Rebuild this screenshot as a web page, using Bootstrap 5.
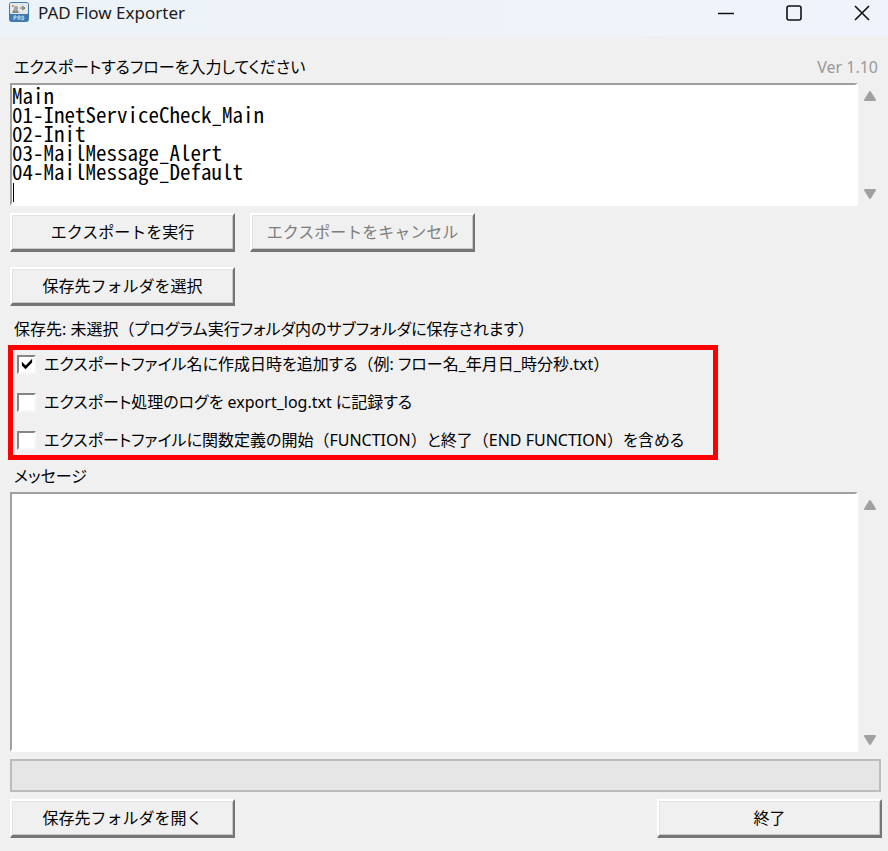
<!DOCTYPE html>
<html lang="ja">
<head>
<meta charset="utf-8">
<meta name="viewport" content="width=device-width, initial-scale=1">
<title>PAD Flow Exporter</title>
<link href="https://cdn.jsdelivr.net/npm/bootstrap@5.3.0/dist/css/bootstrap.min.css" rel="stylesheet">
<style>
  body {
    background: #f0f0f0;
    color: #000;
    font-family: "Noto Sans", "Noto Sans CJK JP", sans-serif;
    font-size: 16px;
    line-height: 24px;
    font-feature-settings: "palt";
  }
  .titlebar { height: 36px; background: linear-gradient(90deg, #ecf3f8, #f0f3fb); }
  .titlebar .app-name { color: #1a1a1a; font-size: 17px; line-height: 26px; }
  .win-btns { gap: 16px; }
  .win-btn { width: 52px; height: 24px; color: #111; }
  .pane { padding: 19px 6px 13px 10px; }
  .caption { padding-left: 4px; }
  .wide { font-feature-settings: normal; }
  .version { color: #999; padding-right: 4px; }
  .stack-gap { margin-bottom: 7px; }
  .text-pane {
    background: #fff;
    border: solid;
    border-width: 2px 3px 3px 2px;
    border-color: #a0a0a0 #fff #fff #a0a0a0;
    color: #000;
    resize: none;
    outline: 0;
    overflow: hidden;
    padding: 0;
    display: block;
  }
  .flow-input {
    height: 123px;
    font-family: "Noto Sans CJK JP", monospace;
    font-feature-settings: "hwid";
    font-size: 21px;
    line-height: 19px;
    padding-top: 1px;
  }
  .caret-bar { left: 3px; top: 100px; width: 1px; height: 19px; background: #000; }
  .scroll-rail { width: 24px; padding: 8px 0 7px; }
  .scroll-rail button { line-height: 0; }
  .action-row { column-gap: 15px; margin-bottom: 15px; }
  .folder-row { margin-bottom: 11px; }
  .btn-classic {
    width: 225px;
    height: 39px;
    background: #f0f0f0;
    border: solid;
    border-width: 2px 2px 3px 2px;
    border-color: #fff #757575 #757575 #fff;
    box-shadow: inset 1px 1px #e3e3e3, inset -1px -1px #c8c8c8;
    color: #000;
    padding: 0 0 1px;
  }
  .btn-classic:disabled { color: #7d7d7d; }
  .options { width: 710px; max-width: 100%; margin-left: -2px; border: 5px solid #f00; padding: 2px 4px 3px; gap: 14px; }
  .tick {
    appearance: none;
    width: 19px;
    height: 19px;
    margin: 0;
    background: #fff;
    border: 2px solid;
    border-color: #858585 #f8f8f8 #f8f8f8 #858585;
    flex: none;
  }
  .tick:checked { background: #fff url("data:image/svg+xml,%3Csvg xmlns='http://www.w3.org/2000/svg' viewBox='0 0 15 15'%3E%3Cpath d='M2 5v4l4 4 7-7V2L6 9z'/%3E%3C/svg%3E") center / 14px no-repeat; }
  .meter { height: 33px; border: 2px solid #bcbcbc; background: #e6e6e6; margin-right: 1px; border-radius: 0; }
  .message-pane { min-height: 160px; }
</style>
<script src="https://cdn.jsdelivr.net/npm/bootstrap@5.3.0/dist/js/bootstrap.bundle.min.js"></script>
</head>
<body class="d-flex flex-column min-vh-100">
<header class="titlebar d-flex align-items-start">
  <svg class="ms-2 flex-shrink-0" width="22" height="24" viewBox="0 0 22 24" aria-hidden="true">
    <rect x="1" y="2" width="20" height="20" rx="3" fill="#3f79ad"/>
    <rect x="2" y="3" width="18" height="11" rx="1" fill="#e6e8e8"/>
    <circle cx="5" cy="6" r="1" fill="#c48645"/>
    <path d="M4 13l2-4 2 2 1-2 2 4z" fill="#85898c"/>
    <circle cx="8" cy="8" r="2" fill="#999d9e"/>
    <path d="M12 8h4M14 6l3 2-3 2" fill="none" stroke="#666b70"/>
    <path d="M6 20v-4h2v2H6M10 20v-4h2v4M10 18h2M14 16v4h1l1-2-1-2z" fill="none" stroke="#b8dcf4"/>
  </svg>
  <h1 class="app-name fw-normal mb-0 ms-2 flex-grow-1">PAD Flow Exporter</h1>
  <div class="win-btns d-flex">
    <button type="button" class="win-btn btn p-0 border-0 lh-1" aria-label="最小化"><svg width="16" height="16" viewBox="0 0 16 16"><path d="M0 8.5h16" stroke="currentColor" stroke-width="1.5"/></svg></button>
    <button type="button" class="win-btn btn p-0 border-0 lh-1" aria-label="最大化"><svg width="16" height="16" viewBox="0 0 16 16"><rect x="1" y="1" width="14" height="14" rx="2" fill="none" stroke="currentColor" stroke-width="1.6"/></svg></button>
    <button type="button" class="win-btn btn p-0 border-0 lh-1" aria-label="閉じる"><svg width="16" height="16" viewBox="0 0 16 16"><path d="M1 1l14 14M15 1L1 15" stroke="currentColor" stroke-width="1.6"/></svg></button>
  </div>
</header>

<main class="pane d-flex flex-column flex-grow-1">
  <div class="d-flex justify-content-between mb-1">
    <label class="caption" for="flows">エクスポートするフローを入力してください</label>
    <span class="version">Ver 1.10</span>
  </div>
  <div class="d-flex stack-gap">
    <div class="position-relative flex-grow-1">
      <textarea id="flows" class="text-pane flow-input w-100" spellcheck="false">Main
01-InetServiceCheck_Main
02-Init
03-MailMessage_Alert
04-MailMessage_Default
</textarea>
      <span class="caret-bar position-absolute"></span>
    </div>
    <div class="scroll-rail d-flex flex-column justify-content-between align-items-center">
      <button type="button" class="btn p-0 border-0" aria-label="上へ"><svg width="12" height="10" viewBox="0 0 12 10"><path d="M6 1l5 8H1z" fill="#a0a0a0" stroke="#a0a0a0" stroke-width="2" stroke-linejoin="round"/></svg></button>
      <button type="button" class="btn p-0 border-0" aria-label="下へ"><svg width="12" height="10" viewBox="0 0 12 10"><path d="M6 9L1 1h10z" fill="#a0a0a0" stroke="#a0a0a0" stroke-width="2" stroke-linejoin="round"/></svg></button>
    </div>
  </div>
  <div class="action-row d-flex flex-wrap">
    <button type="button" class="btn-classic">エクスポートを実行</button>
    <button type="button" class="btn-classic" disabled>エクスポートをキャンセル</button>
  </div>
  <div class="folder-row d-flex"><button type="button" class="btn-classic">保存先フォルダを選択</button></div>
  <p class="caption mb-1">保存先: 未選択<span class="wide">（</span>プログラム実行フォルダ内のサブフォルダに保存されます<span class="wide">）</span></p>
  <div class="options d-flex flex-column">
    <label class="d-flex align-items-center gap-2"><input class="tick" type="checkbox" checked><span>エクスポートファイル名に作成日時を追加する<span class="wide">（</span>例: フロー名_年月日_時分秒.txt<span class="wide">）</span></span></label>
    <label class="d-flex align-items-center gap-2"><input class="tick" type="checkbox"><span>エクスポート処理のログを export_log.txt に記録する</span></label>
    <label class="d-flex align-items-center gap-2"><input class="tick" type="checkbox"><span>エクスポートファイルに関数定義の開始<span class="wide">（</span>FUNCTION<span class="wide">）</span>と終了<span class="wide">（</span>END FUNCTION<span class="wide">）</span>を含める</span></label>
  </div>
  <label class="caption mt-1 mb-1" for="messages">メッセージ</label>
  <div class="d-flex flex-grow-1 stack-gap">
    <textarea id="messages" class="text-pane message-pane flex-grow-1" readonly></textarea>
    <div class="scroll-rail d-flex flex-column justify-content-between align-items-center">
      <button type="button" class="btn p-0 border-0" aria-label="上へ"><svg width="12" height="10" viewBox="0 0 12 10"><path d="M6 1l5 8H1z" fill="#a0a0a0" stroke="#a0a0a0" stroke-width="2" stroke-linejoin="round"/></svg></button>
      <button type="button" class="btn p-0 border-0" aria-label="下へ"><svg width="12" height="10" viewBox="0 0 12 10"><path d="M6 9L1 1h10z" fill="#a0a0a0" stroke="#a0a0a0" stroke-width="2" stroke-linejoin="round"/></svg></button>
    </div>
  </div>
  <div class="meter progress stack-gap" role="progressbar" aria-label="進捗" aria-valuenow="0" aria-valuemin="0" aria-valuemax="100"><div class="progress-bar" style="width:0%"></div></div>
  <div class="d-flex justify-content-between">
    <button type="button" class="btn-classic">保存先フォルダを開く</button>
    <button type="button" class="btn-classic">終了</button>
  </div>
</main>
</body>
</html>
